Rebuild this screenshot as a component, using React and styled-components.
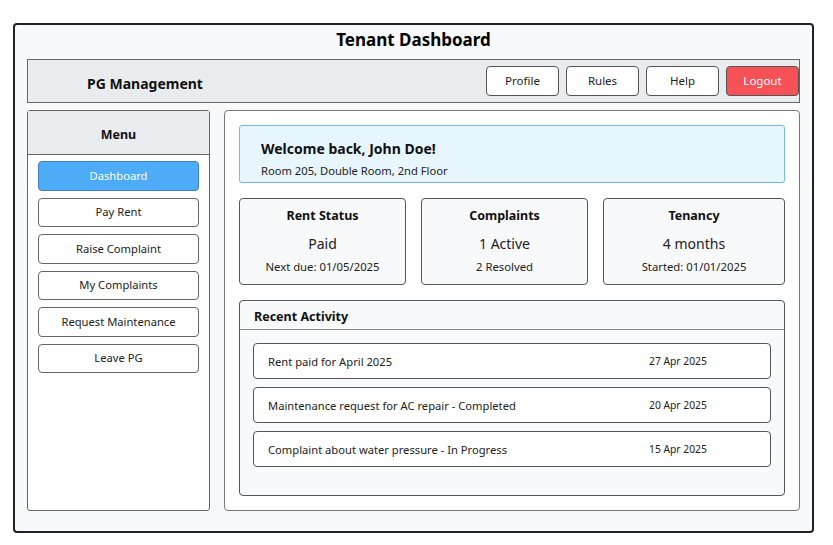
import React from 'react';
import styled, { createGlobalStyle } from 'styled-components';

const GlobalStyle = createGlobalStyle`
  body {
    margin: 0;
    background: #ffffff;
    font-family: 'Noto Sans', 'Open Sans', sans-serif;
    color: #111;
  }
  * { box-sizing: border-box; }
`;

const Frame = styled.div`
  margin: 23px 0 0 13px;
  width: 801px;
  height: 510px;
  border: 2px solid #222;
  border-radius: 4px;
  background: #f8f9fa;
  padding: 0 12px 20px;
  display: flex;
  flex-direction: column;
`;

const Title = styled.h1`
  margin: 0;
  height: 34px;
  padding-bottom: 6px;
  display: flex;
  align-items: center;
  justify-content: center;
  font-size: 17px;
  font-weight: 700;
  color: #000;
`;

const Header = styled.header`
  height: 44px;
  border: 1px solid #666;
  background: #e9ecef;
  display: flex;
  align-items: center;
  justify-content: space-between;
  padding: 0 0 0 59px;
`;

const Brand = styled.div`
  font-size: 14px;
  font-weight: 700;
  color: #111;
  padding-top: 4px;
`;

const Nav = styled.nav`
  display: flex;
  gap: 7px;
`;

const NavButton = styled.button`
  width: 73px;
  height: 30px;
  border: 1px solid #555;
  border-radius: 4px;
  background: ${({ $danger }) => ($danger ? '#f65156' : '#fff')};
  color: ${({ $danger }) => ($danger ? '#fff' : '#222')};
  font-family: inherit;
  font-size: 11.5px;
  padding: 0 0 2px;
`;

const Body = styled.div`
  flex: 1;
  display: flex;
  gap: 14px;
  margin-top: 7px;
`;

const Sidebar = styled.aside`
  width: 183px;
  border: 1px solid #666;
  border-radius: 3px;
  background: #fff;
  display: flex;
  flex-direction: column;
`;

const SideHead = styled.div`
  height: 44px;
  background: #e9ecef;
  border-bottom: 1px solid #666;
  display: flex;
  align-items: center;
  justify-content: center;
  padding-top: 4px;
  font-size: 12.5px;
  font-weight: 700;
  color: #111;
`;

const Menu = styled.div`
  display: flex;
  flex-direction: column;
  gap: 7px;
  padding: 6px 10px;
`;

const MenuItem = styled.div`
  height: 29.5px;
  border: 1px solid ${({ $active }) => ($active ? '#3d7fc0' : '#666')};
  border-radius: 4px;
  background: ${({ $active }) => ($active ? '#4dabf7' : '#fff')};
  color: ${({ $active }) => ($active ? '#fff' : '#222')};
  display: flex;
  align-items: center;
  justify-content: center;
  padding-bottom: 1px;
  font-size: 11.2px;
`;

const Main = styled.main`
  flex: 1;
  border: 1px solid #777;
  border-radius: 4px;
  background: #fff;
  padding: 14px;
  display: flex;
  flex-direction: column;
  gap: 15px;
`;

const Welcome = styled.div`
  height: 58px;
  border: 1px solid #74b4ef;
  border-radius: 3px;
  background: #e7f5fe;
  padding: 13px 21px 0;
`;

const WelcomeTitle = styled.div`
  font-size: 14px;
  font-weight: 700;
  color: #111;
  line-height: 20px;
`;

const WelcomeSub = styled.div`
  font-size: 11.2px;
  color: #222;
  margin-top: 4px;
`;

const Stats = styled.div`
  display: grid;
  grid-template-columns: 167px 167px 1fr;
  gap: 15px;
`;

const StatCard = styled.div`
  height: 87px;
  border: 1px solid #555;
  border-radius: 4px;
  background: #f8f9fa;
  display: flex;
  flex-direction: column;
  align-items: center;
  padding-top: 8px;
`;

const StatLabel = styled.div`
  font-size: 12.5px;
  font-weight: 700;
  color: #111;
  line-height: 18px;
`;

const StatValue = styled.div`
  font-size: 14px;
  color: #222;
  margin-top: 9px;
  line-height: 20px;
`;

const StatSub = styled.div`
  font-size: 11.3px;
  color: #222;
  margin-top: 5px;
`;

const Activity = styled.section`
  flex: 1;
  border: 1px solid #555;
  border-radius: 4px;
  background: #f8f9fa;
  display: flex;
  flex-direction: column;
`;

const ActivityHead = styled.div`
  height: 29px;
  border-bottom: 1px solid #888;
  display: flex;
  align-items: center;
  padding: 3px 14px 0;
  font-size: 12.5px;
  font-weight: 700;
  color: #111;
`;

const ActivityList = styled.div`
  display: flex;
  flex-direction: column;
  gap: 8px;
  padding: 13px 13px;
`;

const ActivityRow = styled.div`
  height: 36px;
  border: 1px solid #555;
  border-radius: 4px;
  background: #fff;
  display: grid;
  grid-template-columns: 1fr 121px;
  align-items: center;
  padding-left: 14px;
  font-size: 11.2px;
  color: #222;
`;

const ActivityDate = styled.span`
  font-size: 10.3px;
`;

const stats = [
  { label: 'Rent Status', value: 'Paid', sub: 'Next due: 01/05/2025' },
  { label: 'Complaints', value: '1 Active', sub: '2 Resolved' },
  { label: 'Tenancy', value: '4 months', sub: 'Started: 01/01/2025' },
];

const activity = [
  { text: 'Rent paid for April 2025', date: '27 Apr 2025' },
  { text: 'Maintenance request for AC repair - Completed', date: '20 Apr 2025' },
  { text: 'Complaint about water pressure - In Progress', date: '15 Apr 2025' },
];

const menu = ['Dashboard', 'Pay Rent', 'Raise Complaint', 'My Complaints', 'Request Maintenance', 'Leave PG'];

export default function App() {
  return (
    <>
      <GlobalStyle />
      <Frame>
        <Title>Tenant Dashboard</Title>
        <Header>
          <Brand>PG Management</Brand>
          <Nav>
            <NavButton>Profile</NavButton>
            <NavButton>Rules</NavButton>
            <NavButton>Help</NavButton>
            <NavButton $danger>Logout</NavButton>
          </Nav>
        </Header>
        <Body>
          <Sidebar>
            <SideHead>Menu</SideHead>
            <Menu>
              {menu.map((m, i) => (
                <MenuItem key={m} $active={i === 0}>{m}</MenuItem>
              ))}
            </Menu>
          </Sidebar>
          <Main>
            <Welcome>
              <WelcomeTitle>Welcome back, John Doe!</WelcomeTitle>
              <WelcomeSub>Room 205, Double Room, 2nd Floor</WelcomeSub>
            </Welcome>
            <Stats>
              {stats.map((s) => (
                <StatCard key={s.label}>
                  <StatLabel>{s.label}</StatLabel>
                  <StatValue>{s.value}</StatValue>
                  <StatSub>{s.sub}</StatSub>
                </StatCard>
              ))}
            </Stats>
            <Activity>
              <ActivityHead>Recent Activity</ActivityHead>
              <ActivityList>
                {activity.map((a) => (
                  <ActivityRow key={a.text}>
                    <span>{a.text}</span>
                    <ActivityDate>{a.date}</ActivityDate>
                  </ActivityRow>
                ))}
              </ActivityList>
            </Activity>
          </Main>
        </Body>
      </Frame>
    </>
  );
}
